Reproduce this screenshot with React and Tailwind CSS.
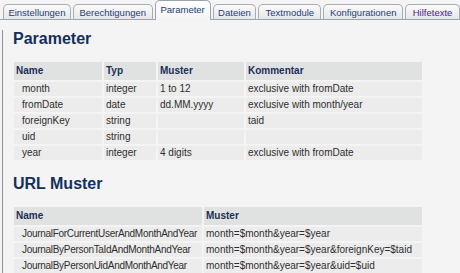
import React from 'react'

const TABS = [
    { label: 'Einstellungen', w: 'w-[68px]' },
    { label: 'Berechtigungen', w: 'w-[80px]' },
    { label: 'Parameter', w: 'w-[56px]', active: true },
    { label: 'Dateien', w: 'w-[44px]' },
    { label: 'Textmodule', w: 'w-[63px]' },
    { label: 'Konfigurationen', w: 'w-[80px]' },
    { label: 'Hilfetexte', w: 'w-[55px]', visited: true },
]

const PARAMS = [
    ['month', 'integer', '1 to 12', 'exclusive with fromDate'],
    ['fromDate', 'date', 'dd.MM.yyyy', 'exclusive with month/year'],
    ['foreignKey', 'string', '', 'taid'],
    ['uid', 'string', '', ''],
    ['year', 'integer', '4 digits', 'exclusive with fromDate'],
]

const URLS = [
    ['JournalForCurrentUserAndMonthAndYear', 'month=$month&year=$year'],
    ['JournalByPersonTaIdAndMonthAndYear', 'month=$month&year=$year&foreignKey=$taid'],
    ['JournalByPersonUidAndMonthAndYear', 'month=$month&year=$year&uid=$uid'],
]

function Tabs() {
    return (
        <div className="flex items-end gap-[2px] h-[20px] pl-[3px] border-b border-[#9ea4ab] text-[9.5px] leading-[12px]">
            {TABS.map((t) => (
                <div
                    key={t.label}
                    className={
                        t.active
                            ? `${t.w} h-[20px] -mb-px pt-[3px] text-center border border-b-0 border-[#9ea4ab] rounded-t-[5px] bg-gradient-to-b from-white to-[#f4f4f4] text-[#1c3a78]`
                            : `${t.w} h-[15px] pt-[2px] text-center border border-b-0 border-[#a7adb3] rounded-t-[5px] bg-gradient-to-b from-[#fafafa] to-[#e6e7e8] text-[#1f3d78]`
                    }
                >
                    <span className={t.visited ? 'text-[#4a1d8a]' : ''}>{t.label}</span>
                </div>
            ))}
        </div>
    )
}

function Cell({ children, head, indent, tight, w }) {
    return (
        <td
            className={`p-0 overflow-hidden whitespace-nowrap ${w || ''} ${
                head
                    ? 'h-[18px] leading-[18px] bg-[#e0e2e2] font-bold text-[#1a2e57]'
                    : 'h-[14px] leading-[14px] bg-[#ececec] text-[#2e2e2e]'
            } ${indent ? 'pl-[8px]' : 'pl-[2px]'} ${tight ? 'tracking-[-0.3px]' : ''}`}
        >
            {children}
        </td>
    )
}

export default function App() {
    return (
        <div
            className="w-[460px] h-[273px] overflow-hidden bg-[#f4f4f4] text-[10px]"
            style={{ fontFamily: '"Liberation Sans", Arial, sans-serif' }}
        >
            <Tabs />
            <div className="ml-[2px] h-full border-l border-[#8b9197] pl-[9px]">
                <h1 className="mt-[10px] ml-[1px] text-[16px] leading-[18px] font-bold text-[#12305f]">Parameter</h1>
                <table className="mt-[12px] table-fixed border-separate border-spacing-[2px] w-[412px]">
                    <thead>
                        <tr>
                            <Cell head w="w-[88px]">Name</Cell>
                            <Cell head w="w-[52px]">Typ</Cell>
                            <Cell head w="w-[86px]">Muster</Cell>
                            <Cell head w="w-[176px]">Kommentar</Cell>
                        </tr>
                    </thead>
                    <tbody>
                        {PARAMS.map((r) => (
                            <tr key={r[0]}>
                                <Cell indent>{r[0]}</Cell>
                                <Cell>{r[1]}</Cell>
                                <Cell>{r[2]}</Cell>
                                <Cell>{r[3]}</Cell>
                            </tr>
                        ))}
                    </tbody>
                </table>
                <h1 className="mt-[13px] ml-[1px] text-[16px] leading-[18px] font-bold text-[#12305f]">URL Muster</h1>
                <table className="mt-[12px] table-fixed border-separate border-spacing-[2px] w-[412px]">
                    <thead>
                        <tr>
                            <Cell head w="w-[188px]">Name</Cell>
                            <Cell head w="w-[218px]">Muster</Cell>
                        </tr>
                    </thead>
                    <tbody>
                        {URLS.map((r) => (
                            <tr key={r[0]}>
                                <Cell indent tight>{r[0]}</Cell>
                                <Cell>{r[1]}</Cell>
                            </tr>
                        ))}
                    </tbody>
                </table>
            </div>
        </div>
    )
}
